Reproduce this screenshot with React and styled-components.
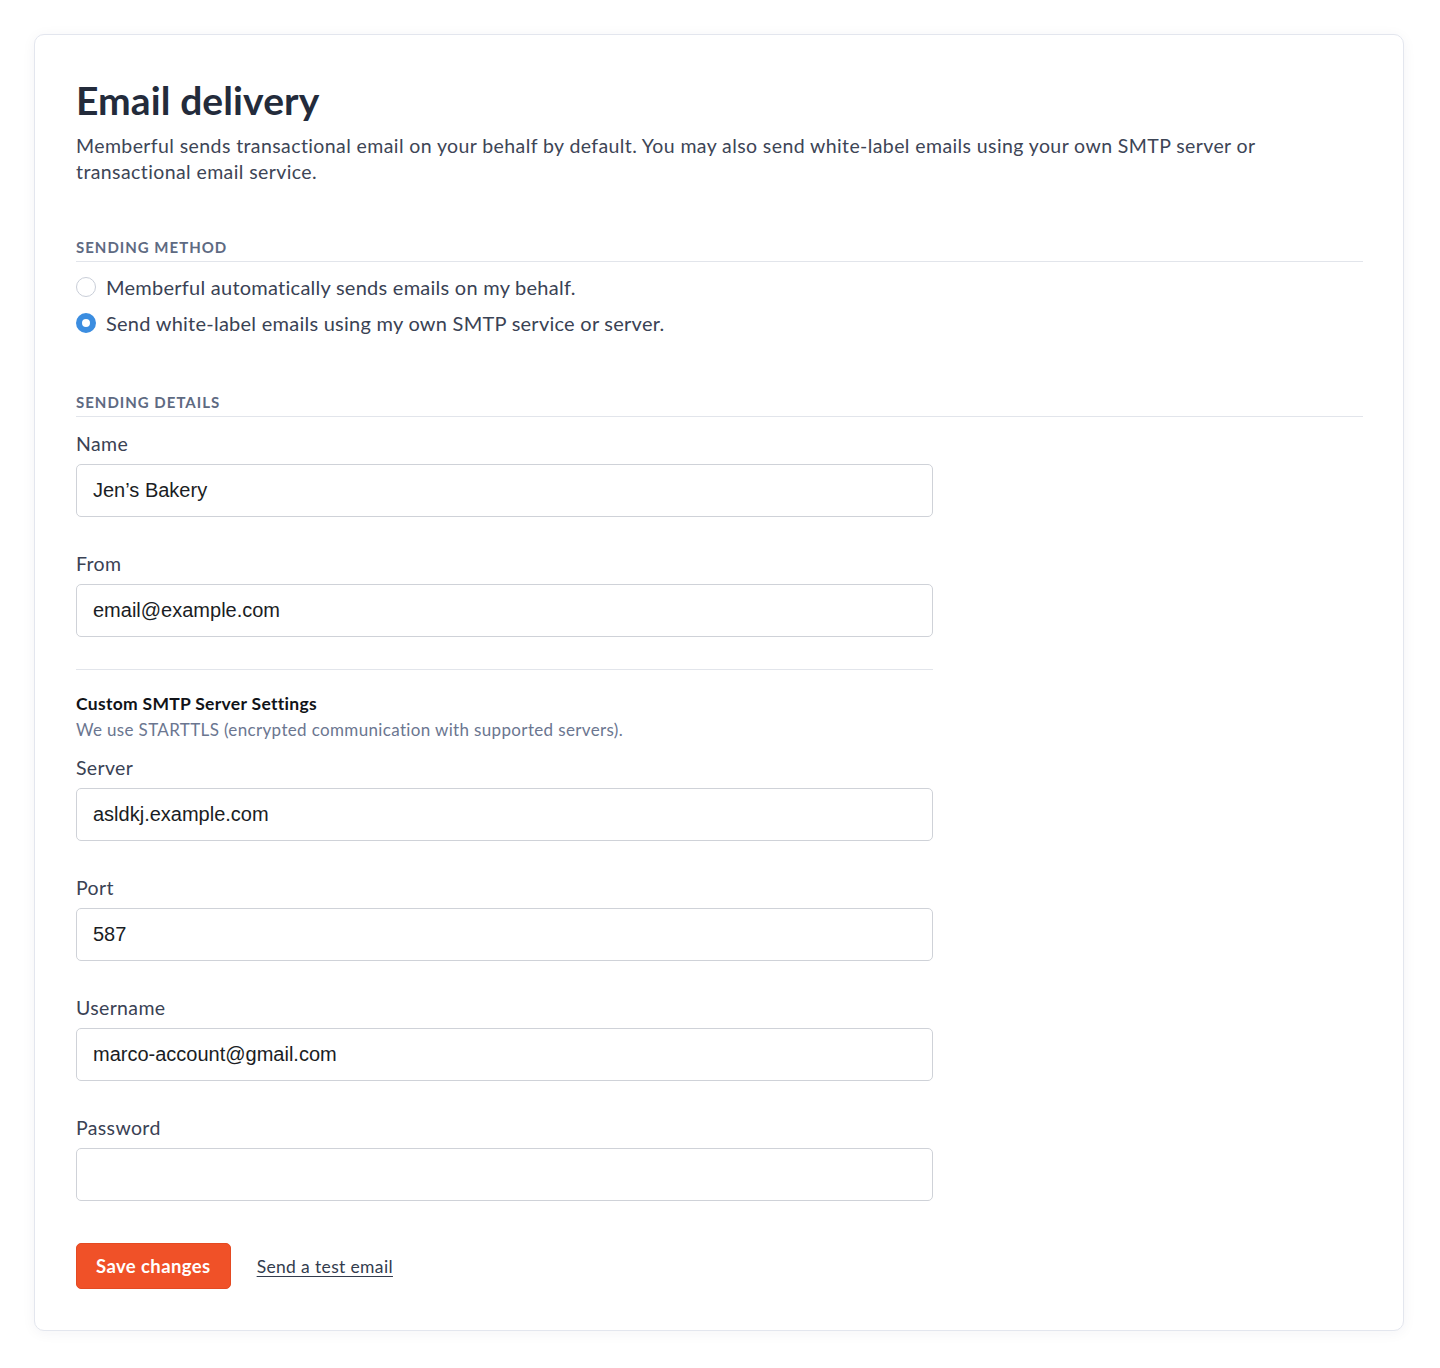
import React from "react";
import styled, { createGlobalStyle } from "styled-components";

const GlobalStyle = createGlobalStyle`
  html, body {
    margin: 0;
    padding: 0;
    background: #ffffff;
  }
  body {
    font-family: Lato, "Open Sans", "Liberation Sans", sans-serif;
    color: #3a4254;
  }
  * { box-sizing: border-box; }
`;

const Page = styled.div`
  padding: 34px 36px 38px 34px;
`;

const Card = styled.div`
  background: #fff;
  border: 1px solid #e3e6ee;
  border-radius: 10px;
  box-shadow: 0 2px 14px rgba(30, 40, 70, 0.05);
  padding: 40px 40px 41px 41px;
`;

const Title = styled.h1`
  margin: 0;
  font-size: 39px;
  line-height: 50px;
  font-weight: 700;
  color: #232b3b;
  letter-spacing: 0.1px;
`;

const Intro = styled.p`
  margin: 8px 0 0;
  font-size: 19.5px;
  line-height: 26px;
  letter-spacing: 0.4px;
  color: #3d4556;
`;

const Section = styled.section`
  margin-top: ${(p) => p.$top}px;
`;

const SectionHeader = styled.h2`
  margin: 0;
  padding-bottom: 4px;
  border-bottom: 1px solid #e2e5eb;
  font-size: 15px;
  line-height: 20px;
  font-weight: 700;
  letter-spacing: 1px;
  text-transform: uppercase;
  color: #5e6a82;
`;

const RadioList = styled.div`
  display: flex;
  flex-direction: column;
  gap: 10px;
  margin-top: 12px;
`;

const RadioRow = styled.label`
  display: flex;
  align-items: center;
  gap: 10px;
  font-size: 20px;
  line-height: 26px;
  letter-spacing: 0.25px;
  color: #3a4254;
  cursor: pointer;
`;

const RadioDot = styled.span`
  width: 20px;
  height: 20px;
  border-radius: 50%;
  flex-shrink: 0;
  border: ${(p) => (p.$checked ? "6px solid #3b8de0" : "1px solid #c9ced8")};
  background: #fff;
`;

const FormColumn = styled.div`
  width: 857px;
`;

const Field = styled.div`
  display: flex;
  flex-direction: column;
  margin-top: ${(p) => p.$top}px;
`;

const Label = styled.label`
  font-size: 19.5px;
  line-height: 26px;
  letter-spacing: 0.35px;
  color: #3a4254;
  margin-bottom: 7px;
`;

const Input = styled.input`
  width: 100%;
  height: 53px;
  border: 1px solid #cfd2d8;
  border-radius: 5px;
  padding: 0 16px;
  font-family: "Liberation Sans", Arial, sans-serif;
  font-size: 20px;
  color: #1a1d24;
  background: #fff;
  outline: none;
`;

const Divider = styled.hr`
  margin: 32px 0 0;
  border: 0;
  border-top: 1px solid #e2e5eb;
`;

const SubTitle = styled.h3`
  margin: 23px 0 0;
  font-size: 17.5px;
  line-height: 22px;
  letter-spacing: 0.3px;
  font-weight: 700;
  color: #111318;
`;

const Hint = styled.p`
  margin: 4px 0 0;
  font-size: 17px;
  line-height: 22px;
  letter-spacing: 0.35px;
  color: #6b7690;
`;

const Actions = styled.div`
  display: flex;
  align-items: center;
  gap: 26px;
  margin-top: 42px;
`;

const SaveButton = styled.button`
  height: 46px;
  padding: 0 19px;
  border: 1px solid #e44a22;
  border-radius: 5px;
  background: #f05128;
  color: #fff;
  font-family: inherit;
  font-size: 18.5px;
  letter-spacing: 0.4px;
  font-weight: 700;
  cursor: pointer;
`;

const TestLink = styled.a`
  font-size: 17.5px;
  letter-spacing: 0.35px;
  color: #333c4e;
  text-decoration: underline;
  text-underline-offset: 3px;
  cursor: pointer;
`;

const fields = [
  { label: "Name", value: "Jen’s Bakery" },
  { label: "From", value: "email@example.com" },
];

const smtpFields = [
  { label: "Server", value: "asldkj.example.com" },
  { label: "Port", value: "587" },
  { label: "Username", value: "marco-account@gmail.com" },
  { label: "Password", value: "", type: "password" },
];

export default function App() {
  return (
    <>
      <GlobalStyle />
      <Page>
        <Card>
          <Title>Email delivery</Title>
          <Intro>
            Memberful sends transactional email on your behalf by default. You
            may also send white-label emails using your own SMTP server or
            transactional email service.
          </Intro>

          <Section $top={52}>
            <SectionHeader>Sending method</SectionHeader>
            <RadioList>
              <RadioRow>
                <RadioDot />
                Memberful automatically sends emails on my behalf.
              </RadioRow>
              <RadioRow>
                <RadioDot $checked />
                Send white-label emails using my own SMTP service or server.
              </RadioRow>
            </RadioList>
          </Section>

          <Section $top={56}>
            <SectionHeader>Sending details</SectionHeader>
            <FormColumn>
              {fields.map((f, i) => (
                <Field key={f.label} $top={i === 0 ? 14 : 34}>
                  <Label>{f.label}</Label>
                  <Input defaultValue={f.value} readOnly />
                </Field>
              ))}
              <Divider />
              <SubTitle>Custom SMTP Server Settings</SubTitle>
              <Hint>
                We use STARTTLS (encrypted communication with supported
                servers).
              </Hint>
              {smtpFields.map((f, i) => (
                <Field key={f.label} $top={i === 0 ? 14 : 34}>
                  <Label>{f.label}</Label>
                  <Input type={f.type || "text"} defaultValue={f.value} readOnly />
                </Field>
              ))}
            </FormColumn>
          </Section>

          <Actions>
            <SaveButton>Save changes</SaveButton>
            <TestLink>Send a test email</TestLink>
          </Actions>
        </Card>
      </Page>
    </>
  );
}
